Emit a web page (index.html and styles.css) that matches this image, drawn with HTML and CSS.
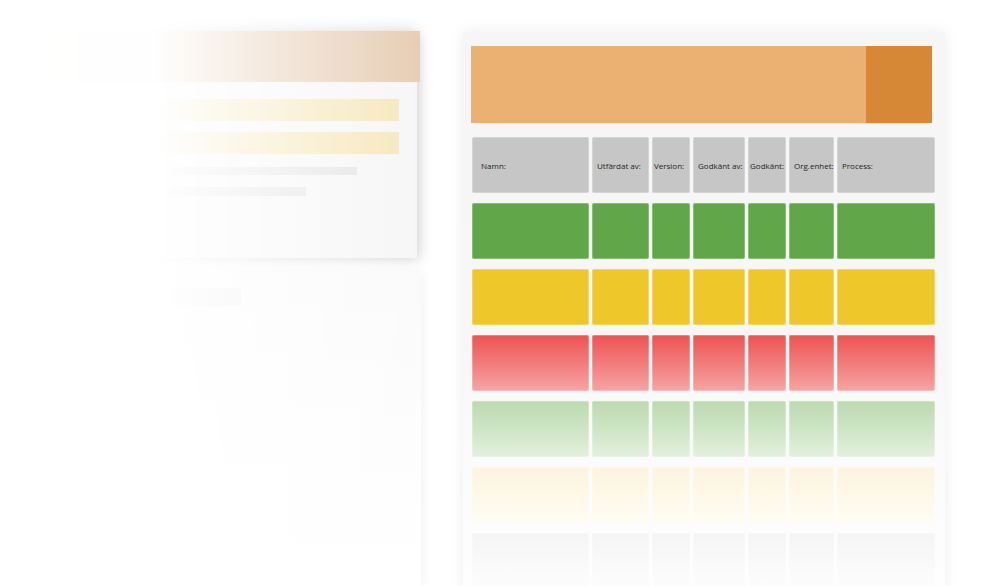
FILE: index.html
```html
<!DOCTYPE html>
<html lang="sv">
<head>
    <meta charset="UTF-8">
    <meta name="viewport" content="width=device-width, initial-scale=1.0">
    <title>Dokumentstatus</title>
    <link rel="stylesheet" href="styles.css">
</head>
<body>
    <div class="scene">
        <div class="left">
            <div class="panel-top">
                <div class="panel-head"></div>
                <div class="panel-body">
                    <div class="bar"></div>
                    <div class="bar"></div>
                    <div class="line line-long"></div>
                    <div class="line line-short"></div>
                </div>
            </div>
            <div class="panel-bottom">
                <div class="chip"></div>
            </div>
        </div>

        <div class="doc">
            <div class="doc-head">
                <div class="doc-head-tab"></div>
            </div>

            <div class="table">
                <div class="cell head first">Namn:</div>
                <div class="cell head">Utfärdat av:</div>
                <div class="cell head narrow">Version:</div>
                <div class="cell head">Godkänt av:</div>
                <div class="cell head narrow">Godkänt:</div>
                <div class="cell head">Org.enhet:</div>
                <div class="cell head">Process:</div>

                <div class="cell green"></div><div class="cell green"></div><div class="cell green"></div><div class="cell green"></div><div class="cell green"></div><div class="cell green"></div><div class="cell green"></div>
                <div class="cell yellow"></div><div class="cell yellow"></div><div class="cell yellow"></div><div class="cell yellow"></div><div class="cell yellow"></div><div class="cell yellow"></div><div class="cell yellow"></div>
                <div class="cell red"></div><div class="cell red"></div><div class="cell red"></div><div class="cell red"></div><div class="cell red"></div><div class="cell red"></div><div class="cell red"></div>
                <div class="cell green-soft"></div><div class="cell green-soft"></div><div class="cell green-soft"></div><div class="cell green-soft"></div><div class="cell green-soft"></div><div class="cell green-soft"></div><div class="cell green-soft"></div>
                <div class="cell yellow-soft"></div><div class="cell yellow-soft"></div><div class="cell yellow-soft"></div><div class="cell yellow-soft"></div><div class="cell yellow-soft"></div><div class="cell yellow-soft"></div><div class="cell yellow-soft"></div>
                <div class="cell grey-soft"></div><div class="cell grey-soft"></div><div class="cell grey-soft"></div><div class="cell grey-soft"></div><div class="cell grey-soft"></div><div class="cell grey-soft"></div><div class="cell grey-soft"></div>
            </div>
        </div>
    </div>
</body>
</html>
```

FILE: styles.css
```css
body {
    margin: 0;
    padding: 0;
    background-color: #fff;
    font-family: 'Open Sans', 'Liberation Sans', sans-serif;
    color: #333;
    height: 586px;
    overflow: hidden;
}
.scene {
    display: flex;
    align-items: flex-start;
    height: 586px;
}

/* faded panels on the left */
.left {
    width: 436px;
    height: 586px;
    box-sizing: border-box;
    padding: 31px 19px 0 5px;
    display: flex;
    flex-direction: column;
    gap: 14px;
    flex-shrink: 0;
    -webkit-mask-image: linear-gradient(to right, rgba(0, 0, 0, 0) 0, rgba(0, 0, 0, 0.02) 155px, rgba(0, 0, 0, 0.95) 415px);
    mask-image: linear-gradient(to right, rgba(0, 0, 0, 0) 0, rgba(0, 0, 0, 0.02) 155px, rgba(0, 0, 0, 0.95) 415px);
}
.panel-top {
    height: 227px;
    background-color: #f6f6f6;
    box-shadow: 0 -3px 14px rgba(0, 0, 0, 0.12), 4px 4px 12px rgba(0, 0, 0, 0.1);
}
.panel-head {
    height: 51px;
    margin-right: -3px;
    background-color: #e6ccb3;
}
.panel-body {
    padding: 17px 18px 0 160px;
}
.bar {
    height: 22px;
    margin-bottom: 11px;
    background-color: #f6e7b8;
}
.line {
    margin-left: 5px;
    background-color: #e4e4e4;
}
.line-long {
    width: 187px;
    height: 8px;
    margin-top: 13px;
}
.line-short {
    width: 136px;
    height: 9px;
    margin-top: 12px;
}
.panel-bottom {
    flex: 1;
    margin-right: -4px;
    background: linear-gradient(#fafafa, #fdfdfd 50%, #fff);
    box-shadow: 2px 0 10px rgba(0, 0, 0, 0.05);
    padding: 16px 0 0 167px;
}
.chip {
    width: 69px;
    height: 18px;
    background-color: #eeeeee;
}

/* document card */
.doc {
    width: 482px;
    height: 560px;
    margin: 32px 0 0 27px;
    padding: 14px 12px 0 8px;
    box-sizing: border-box;
    background: linear-gradient(#f6f6f6 0, #f7f7f7 330px, #fcfcfc 450px, #fefefe 100%);
    box-shadow: 0 0 16px rgba(0, 0, 0, 0.07);
    flex-shrink: 0;
}
.doc-head {
    height: 77px;
    background-color: #ebb172;
    display: flex;
    justify-content: flex-end;
    margin-right: 1px;
}
.doc-head-tab {
    width: 66px;
    background-color: #d78837;
}
.table {
    display: grid;
    grid-template-columns: 117px 57px 38px 52px 38px 45px 1fr;
    grid-auto-rows: 56px;
    column-gap: 3px;
    row-gap: 10px;
    margin-top: 14px;
    margin-right: -2px;
    margin-left: 1px;
}
.cell {
    border-radius: 2px;
    box-shadow: inset 0 0 0 1px rgba(255, 255, 255, 0.25);
}
.head {
    background-color: #c6c6c6;
    display: flex;
    align-items: center;
    padding-left: 5px;
    font-size: 8px;
    white-space: nowrap;
    color: #1f1f1f;
}
.head.narrow {
    padding-left: 2px;
}
.head.first {
    padding-left: 9px;
}
.green {
    background-color: #62a64a;
}
.yellow {
    background-color: #eec82b;
}
.red {
    background: linear-gradient(#ee5252, #f6a5a5);
}
.green-soft {
    background: linear-gradient(#bbdaae, #e3f0dd);
}
.yellow-soft {
    background: linear-gradient(#fdf4dc, #fffcf4);
}
.grey-soft {
    background: linear-gradient(#f5f5f5, #fdfdfd);
}
```
